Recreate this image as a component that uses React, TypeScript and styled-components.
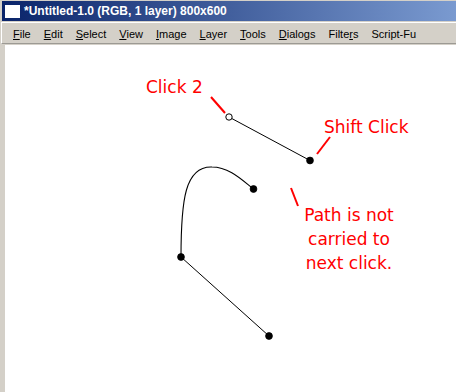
import styled, { createGlobalStyle } from "styled-components";

const Global = createGlobalStyle`
  html, body {
    margin: 0;
    padding: 0;
    background: #d4d0c8;
  }
`;

type MenuEntry = { label: string; key?: number };

const menu: MenuEntry[] = [
  { label: "File", key: 0 },
  { label: "Edit", key: 0 },
  { label: "Select", key: 0 },
  { label: "View", key: 0 },
  { label: "Image", key: 0 },
  { label: "Layer", key: 0 },
  { label: "Tools", key: 0 },
  { label: "Dialogs", key: 0 },
  { label: "Filters", key: 5 },
  { label: "Script-Fu" },
];

const MenuLabel = ({ item }: { item: MenuEntry }) => {
  if (item.key === undefined) return <>{item.label}</>;
  const i = item.key;
  return (
    <>
      {item.label.slice(0, i)}
      <u>{item.label[i]}</u>
      {item.label.slice(i + 1)}
    </>
  );
};

export default function App() {
  return (
    <Window>
      <Global />
      <TitleBar>
        <AppIcon />
        <Title>*Untitled-1.0 (RGB, 1 layer) 800x600</Title>
      </TitleBar>
      <MenuBar>
        {menu.map((m) => (
          <MenuItem key={m.label}>
            <MenuLabel item={m} />
          </MenuItem>
        ))}
      </MenuBar>
      <Workspace>
        <Canvas>
          <svg width="451" height="347" viewBox="5 45 451 347">
            <g stroke="#000" fill="none" strokeWidth="1">
              <line x1="229" y1="117" x2="310" y2="160.5" />
              <path d="M181 257 C181 200 185 166 212 167 C229 167 242 180 253.5 189" strokeWidth="1.1" />
              <line x1="181" y1="257" x2="269" y2="336" />
            </g>
            <circle cx="229" cy="117" r="3.2" fill="#fff" stroke="#000" strokeWidth="1" />
            <Node cx="310" cy="160.5" r="3.4" />
            <Node cx="253.5" cy="189" r="3.4" />
            <Node cx="181" cy="257" r="3.4" />
            <Node cx="269" cy="336" r="3.4" />
            <g stroke="#ff0000" strokeWidth="2">
              <line x1="211" y1="97" x2="225" y2="113" />
              <line x1="330" y1="137" x2="317" y2="154" />
              <line x1="291" y1="188" x2="298" y2="206" />
            </g>
          </svg>
          <Note $x={141} $y={34}>Click 2</Note>
          <Note $x={319} $y={74}>Shift Click</Note>
          <NoteBlock $x={286} $y={158}>
            Path is not
            <br />
            carried to
            <br />
            next click.
          </NoteBlock>
        </Canvas>
      </Workspace>
    </Window>
  );
}

const Window = styled.div`
  width: 456px;
  height: 392px;
  display: flex;
  flex-direction: column;
  background: #d4d0c8;
  padding-top: 1px;
  box-sizing: border-box;
  overflow: hidden;
`;

const TitleBar = styled.div`
  height: 20px;
  margin-left: 2px;
  display: flex;
  align-items: center;
  gap: 4px;
  padding: 1px 0 0 3px;
  box-sizing: border-box;
  background: linear-gradient(to right, #0a246a 0%, #7a9ad0 100%);
`;

const AppIcon = styled.div`
  width: 15px;
  height: 13px;
  background: #fff;
`;

const Title = styled.span`
  font-family: "Liberation Sans", Arial, sans-serif;
  font-weight: bold;
  font-size: 12px;
  color: #fff;
  white-space: nowrap;
`;

const MenuBar = styled.div`
  margin: 1px 0 0 1px;
  height: 23px;
  display: flex;
  align-items: center;
  gap: 13px;
  padding: 2px 0 0 11px;
  box-sizing: border-box;
  border-top: 1px solid #fff;
  border-left: 1px solid #fff;
  border-bottom: 1px solid #9c9a94;
`;

const MenuItem = styled.span`
  font-family: "Liberation Sans", Tahoma, sans-serif;
  font-size: 11px;
  color: #000;
  white-space: nowrap;

  u {
    text-decoration-thickness: 1px;
    text-underline-offset: 1px;
  }
`;

const Workspace = styled.div`
  flex: 1;
  display: flex;
  margin-top: 1px;
  padding-left: 5px;
`;

const Canvas = styled.div`
  flex: 1;
  position: relative;
  background: #fff;

  svg {
    display: block;
  }
`;

const Node = styled.circle`
  fill: #000;
  stroke: #000;
  stroke-width: 0.8;
`;

const Note = styled.div<{ $x: number; $y: number }>`
  position: absolute;
  left: ${(p) => p.$x}px;
  top: ${(p) => p.$y}px;
  font-family: "DejaVu Sans", Verdana, sans-serif;
  font-size: 17px;
  line-height: 17px;
  color: #ff0000;
  white-space: nowrap;
`;

const NoteBlock = styled(Note)`
  width: 116px;
  text-align: center;
  line-height: 24px;
`;
